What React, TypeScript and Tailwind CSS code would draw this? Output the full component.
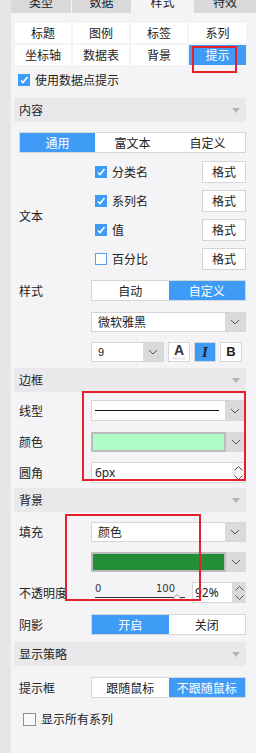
import React from "react";

const Chevron = () => (
  <svg width="10" height="6" viewBox="0 0 10 6">
    <path d="M1 1L5 5L9 1" fill="none" stroke="#555" strokeWidth="1" />
  </svg>
);
const ChevUp = () => (
  <svg width="9" height="5" viewBox="0 0 9 5">
    <path d="M0.5 4.5L4.5 0.5L8.5 4.5" fill="none" stroke="#555" strokeWidth="1" />
  </svg>
);
const ChevDown = () => (
  <svg width="9" height="5" viewBox="0 0 9 5">
    <path d="M0.5 0.5L4.5 4.5L8.5 0.5" fill="none" stroke="#555" strokeWidth="1" />
  </svg>
);

function Checked() {
  return (
    <span className="flex h-[12px] w-[12px] items-center justify-center bg-[#3f9cf6]">
      <svg width="10" height="10" viewBox="0 0 10 10">
        <path d="M2 5.5L4 7.5L8.5 2" fill="none" stroke="#fff" strokeWidth="1.6" />
      </svg>
    </span>
  );
}

function Header({ title, className }: { title: string; className: string }) {
  return (
    <div className={"flex h-[24px] items-center justify-between bg-[#e9e9eb] pl-[5px] pr-[6px] " + className}>
      <span>{title}</span>
      <svg width="8" height="5" viewBox="0 0 8 5">
        <path d="M0 0H8L4 5Z" fill="#b4b4b4" />
      </svg>
    </div>
  );
}

function Seg({ items, active, className }: { items: string[]; active: number; className: string }) {
  return (
    <div className={"flex border border-[#d6d6d6] bg-white " + className}>
      {items.map((t, i) => (
        <div
          key={i}
          className={"flex flex-1 items-center justify-center " + (i === active ? "bg-[#3f9cf6] text-white" : "")}
        >
          {t}
        </div>
      ))}
    </div>
  );
}

function Row({ label, children, className }: { label?: string; children: React.ReactNode; className: string }) {
  return (
    <div className={"flex items-center " + className}>
      <div className="w-[77px] shrink-0 pl-[5px]">{label}</div>
      {children}
    </div>
  );
}

function ArrowBox() {
  return (
    <div className="flex w-[20px] shrink-0 items-center justify-center bg-[#dadadc]">
      <Chevron />
    </div>
  );
}

function FmtBtn() {
  return (
    <div className="flex h-[22px] w-[44px] items-center justify-center border border-[#d4d4d4] bg-white">格式</div>
  );
}

export default function App() {
  return (
    <div className="flex h-[753px] w-[256px] font-['Noto_Sans_CJK_SC',sans-serif] text-[12px] text-[#222]">
      <div className="w-[11px] shrink-0 bg-[#e6e6e8]" />
      <div className="relative flex-1 bg-[#f4f4f6]">
        {/* top tabs */}
        <div className="flex h-[13px] overflow-hidden">
          <div className="flex w-[60px] justify-center bg-[#d9d9db]">
            <span className="-mt-[4px] leading-[12px]">类型</span>
          </div>
          <div className="w-[1px]" />
          <div className="flex w-[59px] justify-center bg-[#d9d9db]">
            <span className="-mt-[4px] leading-[12px]">数据</span>
          </div>
          <div className="flex w-[63px] justify-center">
            <span className="-mt-[4px] leading-[12px]">样式</span>
          </div>
          <div className="flex w-[62px] justify-center bg-[#d9d9db]">
            <span className="-mt-[4px] leading-[12px]">特效</span>
          </div>
        </div>

        <div className="pl-[3px] pr-[10px]">
          {/* sub tabs */}
          <div className="ml-[1px] mt-[10px] grid grid-cols-[56px_56px_56px_57px] grid-rows-[20px_20px] gap-[2px]">
            {["标题", "图例", "标签", "系列", "坐标轴", "数据表", "背景", "提示"].map((t, i) => (
              <div
                key={i}
                className={"flex items-center justify-center " + (i === 7 ? "bg-[#3f9cf6] text-white" : "bg-white")}
              >
                {t}
              </div>
            ))}
          </div>

          <div className="mt-[5px] flex h-[20px] items-center gap-[5px] pl-[4px]">
            <Checked />
            <span>使用数据点提示</span>
          </div>

          <Header title="内容" className="mt-[8px]" />

          <Seg items={["通用", "富文本", "自定义"]} active={0} className="ml-[5px] mt-[10px] h-[21px]" />

          {/* 文本 group */}
          <div className="mt-[8px] flex items-center">
            <div className="w-[77px] shrink-0 pl-[5px]">文本</div>
            <div className="flex flex-1 flex-col gap-[7px]">
              {[
                ["分类名", true],
                ["系列名", true],
                ["值", true],
                ["百分比", false],
              ].map(([t, c], i) => (
                <div key={i} className="flex h-[22px] items-center justify-between">
                  <div className="flex items-center gap-[5px] pl-[4px]">
                    {c ? (
                      <Checked />
                    ) : (
                      <span className="h-[12px] w-[12px] border border-[#5a9fe6] bg-white" />
                    )}
                    <span>{t as string}</span>
                  </div>
                  <FmtBtn />
                </div>
              ))}
            </div>
          </div>

          {/* 样式 */}
          <Row label="样式" className="mt-[10px] h-[21px]">
            <Seg items={["自动", "自定义"]} active={1} className="h-[21px] w-[155px]" />
          </Row>
          <Row className="mt-[11px] h-[20px]">
            <div className="flex h-[20px] w-[155px] border border-[#d6d6d6] bg-white">
              <div className="flex flex-1 items-center pl-[6px]">微软雅黑</div>
              <ArrowBox />
            </div>
          </Row>
          <Row className="mt-[10px] h-[20px]">
            <div className="flex h-[20px] w-[73px] border border-[#d6d6d6] bg-white">
              <div className="flex flex-1 items-center pl-[6px] font-['Liberation_Sans',sans-serif] text-[11px]">9</div>
              <ArrowBox />
            </div>
            <div className="ml-[4px] flex h-[20px] w-[22px] flex-col items-center justify-center border border-[#d6d6d6] bg-white">
              <span className="font-['Liberation_Sans',sans-serif] text-[14px] font-bold leading-[12px] text-[#333]">A</span>
              <span className="mt-[1px] h-[3px] w-[14px] bg-[#eeeeee]" />
            </div>
            <div className="ml-[4px] flex h-[20px] w-[22px] items-center justify-center border border-[#d6d6d6] bg-[#3f9cf6]">
              <span className="font-['Liberation_Serif',serif] text-[15px] font-bold italic leading-[14px] text-[#222]">I</span>
            </div>
            <div className="ml-[4px] flex h-[20px] w-[22px] items-center justify-center border border-[#d6d6d6] bg-white">
              <span className="font-['Liberation_Sans',sans-serif] text-[13px] font-bold leading-[14px] text-[#222]">B</span>
            </div>
          </Row>

          <Header title="边框" className="mt-[6px]" />

          <Row label="线型" className="mt-[8px] h-[21px]">
            <div className="flex h-[21px] w-[155px] border border-[#d6d6d6] bg-white">
              <div className="flex flex-1 items-center pl-[3px] pr-[6px]">
                <div className="h-[1px] w-full bg-[#111]" />
              </div>
              <ArrowBox />
            </div>
          </Row>
          <Row label="颜色" className="mt-[11px] h-[20px]">
            <div className="flex h-[20px] w-[155px]">
              <div className="flex-1 border-2 border-[#bcbcbc] bg-[#aefcc8]" />
              <ArrowBox />
            </div>
          </Row>
          <Row label="圆角" className="mt-[10px] h-[21px]">
            <div className="flex h-[21px] w-[155px] border border-[#d6d6d6] bg-white">
              <div className="flex flex-1 items-center pl-[3px] font-['Noto_Sans',sans-serif] text-[12px]">6px</div>
              <div className="flex w-[13px] flex-col items-center justify-center gap-[4px] bg-[#f6f6f6]">
                <ChevUp />
                <ChevDown />
              </div>
            </div>
          </Row>

          <Header title="背景" className="mt-[5px]" />

          <Row label="填充" className="mt-[10px] h-[20px]">
            <div className="flex h-[20px] w-[155px] border border-[#d6d6d6] bg-white">
              <div className="flex flex-1 items-center pl-[6px]">颜色</div>
              <ArrowBox />
            </div>
          </Row>
          <Row className="mt-[10px] h-[20px]">
            <div className="flex h-[20px] w-[155px]">
              <div className="flex-1 border-2 border-[#bcbcbc] bg-[#238e37]" />
              <ArrowBox />
            </div>
          </Row>
          <Row label="不透明度" className="mt-[10px] h-[21px]">
            <div className="relative flex h-[21px] w-[101px] flex-col pl-[4px] pt-[1px]">
              <div className="flex w-[80px] justify-between font-['DejaVu_Sans',sans-serif] text-[10px] leading-[12px] text-[#333]">
                <span>0</span>
                <span>100</span>
              </div>
              <div className="mt-[2px] h-[1px] w-[90px] bg-[#333]" />
              <svg className="absolute left-[82px] top-[12px]" width="8" height="7" viewBox="0 0 8 7">
                <path d="M0.5 6.5V4L4 0.5L7.5 4V6.5Z" fill="#f4f4f6" stroke="#9a9a9a" strokeWidth="1" />
              </svg>
            </div>
            <div className="flex h-[21px] w-[54px]">
              <div className="flex flex-1 items-center border border-[#d6d6d6] bg-white pl-[2px] font-['Noto_Sans',sans-serif] text-[12px]">
                92%
              </div>
              <div className="flex w-[13px] flex-col items-center justify-center gap-[4px] bg-[#dadadc]">
                <ChevUp />
                <ChevDown />
              </div>
            </div>
          </Row>
          <Row label="阴影" className="mt-[11px] h-[21px]">
            <Seg items={["开启", "关闭"]} active={0} className="h-[21px] w-[155px]" />
          </Row>

          <Header title="显示策略" className="mt-[7px]" />

          <Row label="提示框" className="mt-[11px] h-[21px]">
            <Seg items={["跟随鼠标", "不跟随鼠标"]} active={1} className="h-[21px] w-[155px]" />
          </Row>

          <div className="mt-[11px] flex h-[20px] items-center gap-[5px] pl-[9px]">
            <span className="h-[13px] w-[13px] border border-[#8f8f8f] bg-[#f8f8f8]" />
            <span>显示所有系列</span>
          </div>
        </div>

        {/* red annotation boxes */}
        <div className="pointer-events-none absolute left-[181px] top-[46px] h-[27px] w-[45px] border-2 border-[#e51f2b]" />
        <div className="pointer-events-none absolute left-[71px] top-[391px] h-[90px] w-[164px] border-2 border-[#e51f2b]" />
        <div className="pointer-events-none absolute left-[54px] top-[514px] h-[87px] w-[136px] border-2 border-[#e51f2b]" />
      </div>
    </div>
  );
}
